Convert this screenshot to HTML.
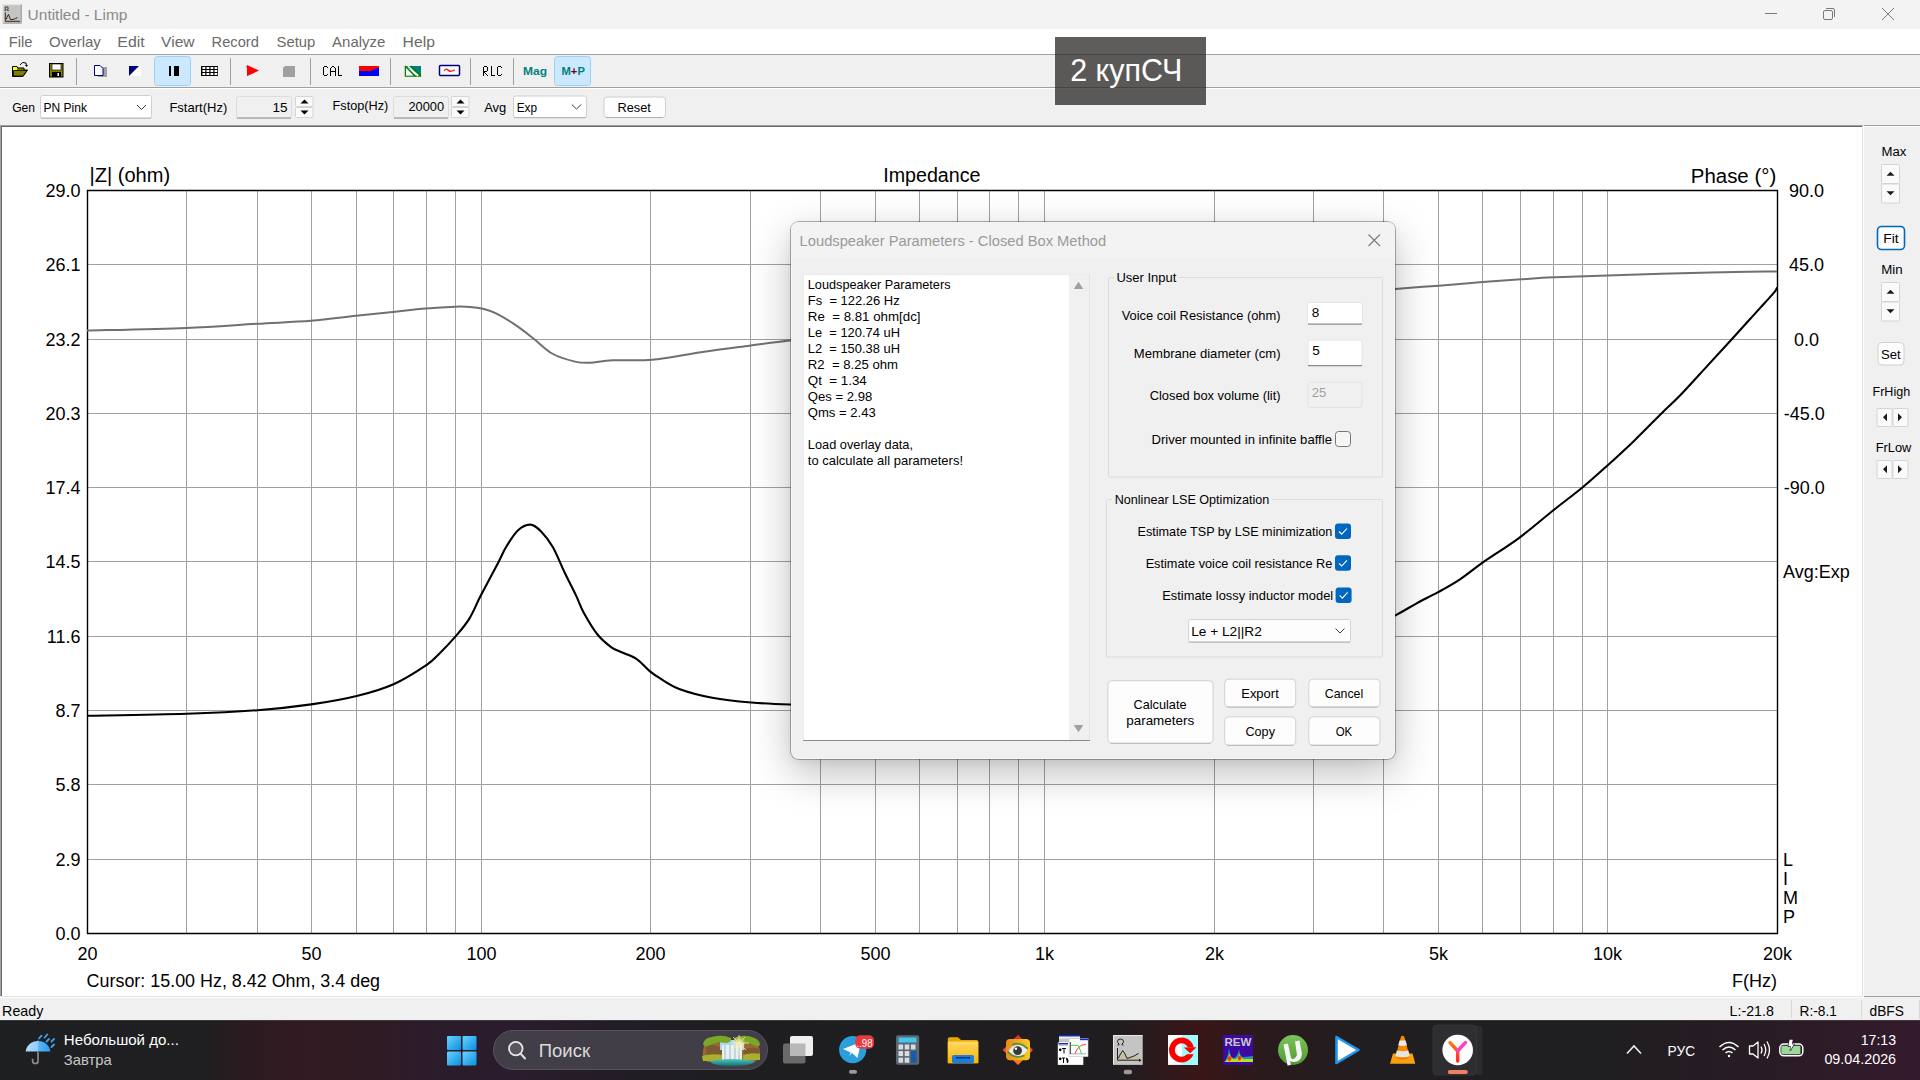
<!DOCTYPE html><html><head><meta charset="utf-8"><style>*{margin:0;padding:0}html,body{width:1920px;height:1080px;overflow:hidden;background:#f0f0f0;position:relative;font-family:"Liberation Sans",sans-serif}svg text{white-space:pre}</style></head><body><svg width="1920" height="126" viewBox="0 0 1920 126" style="position:absolute;left:0px;top:0px;" font-family='"Liberation Sans", sans-serif' shape-rendering="auto"><rect x="0" y="0" width="1920" height="29" fill="#f3f3f3"/><rect x="0" y="29" width="1920" height="25" fill="#ffffff"/><rect x="0" y="54" width="1920" height="1" fill="#a0a0a0"/><rect x="0" y="55" width="1920" height="32" fill="#f0f0f0"/><rect x="0" y="87" width="1920" height="1" fill="#a0a0a0"/><rect x="0" y="88" width="1920" height="1" fill="#ffffff"/><rect x="0" y="89" width="1920" height="36" fill="#f0f0f0"/><rect x="2.5" y="4.2" width="19.2" height="19.4" fill="#c4c4c4"/><path d="M3 23.6 V4.7 H21.7" fill="none" stroke="#ecead0" stroke-width="1"/><path d="M3 23.1 H21.2 V4.5" fill="none" stroke="#9a9a9a" stroke-width="1"/><path d="M5.8 21 L6.5 19 L7.5 16 L8.5 14.5 L9.5 17 L10.5 19.5 L13 19.5 L15.5 18.5 L17.5 17.5 L18.3 17.5 V21Z" fill="#c8c0a0"/><path d="M5.3 12.5 V21.3 H20 M5.8 19.5 L6.8 18 L7.5 16 L8.5 14.5 L9.5 17 L10.5 19.5 L13 19.5 L15.5 18.5 L17.5 17.5" fill="none" stroke="#1a1a1a" stroke-width="0.9"/><path d="M4.3 10.3 H5.8 V9.5 Q5 8.7 5 7.9 Q5 6.8 6.6 6.8 Q8.2 6.8 8.2 7.9 Q8.2 8.7 7.4 9.5 V10.3 H8.8" fill="none" stroke="#1a1a1a" stroke-width="0.9"/><text x="27.60" y="20" font-size="15" fill="#8a8a8a" font-weight="normal" textLength="99.80" lengthAdjust="spacingAndGlyphs" >Untitled - Limp</text><line x1="1765" y1="13.5" x2="1777" y2="13.5" stroke="#7a7a7a" stroke-width="1"/><rect x="1823.5" y="10.5" width="9" height="9" rx="1.5" fill="none" stroke="#7a7a7a" stroke-width="1"/><path d="M1826 8.5 H1833 A1.5 1.5 0 0 1 1834.5 10 V17" fill="none" stroke="#7a7a7a" stroke-width="1"/><path d="M1882 8 L1894 20 M1894 8 L1882 20" stroke="#7a7a7a" stroke-width="1"/><text x="8.72" y="47" font-size="14.6" fill="#6a6a6a" font-weight="normal" textLength="23.90" lengthAdjust="spacingAndGlyphs" >File</text><text x="49.12" y="47" font-size="14.6" fill="#6a6a6a" font-weight="normal" textLength="51.75" lengthAdjust="spacingAndGlyphs" >Overlay</text><text x="117.37" y="47" font-size="14.6" fill="#6a6a6a" font-weight="normal" textLength="27.25" lengthAdjust="spacingAndGlyphs" >Edit</text><text x="161.12" y="47" font-size="14.6" fill="#6a6a6a" font-weight="normal" textLength="33.50" lengthAdjust="spacingAndGlyphs" >View</text><text x="211.62" y="47" font-size="14.6" fill="#6a6a6a" font-weight="normal" textLength="47.25" lengthAdjust="spacingAndGlyphs" >Record</text><text x="276.62" y="47" font-size="14.6" fill="#6a6a6a" font-weight="normal" textLength="38.75" lengthAdjust="spacingAndGlyphs" >Setup</text><text x="332.12" y="47" font-size="14.6" fill="#6a6a6a" font-weight="normal" textLength="53.25" lengthAdjust="spacingAndGlyphs" >Analyze</text><text x="402.62" y="47" font-size="14.6" fill="#6a6a6a" font-weight="normal" textLength="32.25" lengthAdjust="spacingAndGlyphs" >Help</text><line x1="76.5" y1="58" x2="76.5" y2="85" stroke="#a0a0a0" stroke-width="1"/><line x1="230.5" y1="58" x2="230.5" y2="85" stroke="#a0a0a0" stroke-width="1"/><line x1="310.5" y1="58" x2="310.5" y2="85" stroke="#a0a0a0" stroke-width="1"/><line x1="390.5" y1="58" x2="390.5" y2="85" stroke="#a0a0a0" stroke-width="1"/><line x1="470.5" y1="58" x2="470.5" y2="85" stroke="#a0a0a0" stroke-width="1"/><line x1="513.5" y1="58" x2="513.5" y2="85" stroke="#a0a0a0" stroke-width="1"/><path d="M12.5 66.5 H17 L18 68 H24 V70 H27.5 L23 76.5 H12.5 Z" fill="#808000" stroke="#000" stroke-width="1"/><path d="M13 67 H17 V70 H14 L13 73Z" fill="#ffff00"/><path d="M13.5 70.5 H27 L23 76 H13.5Z" fill="#808000" stroke="#000" stroke-width="0.8"/><path d="M20 65 Q22 61 26 63 L26.5 66" fill="none" stroke="#000" stroke-width="1"/><path d="M25 65 h3 l-1.5 2z" fill="#000"/><rect x="49.5" y="63.5" width="13.5" height="13.5" fill="#808000" stroke="#000" stroke-width="1"/><rect x="52" y="64" width="9" height="6" fill="#fff" stroke="#000" stroke-width="0.6"/><rect x="52" y="72" width="9" height="5" fill="#000"/><rect x="57.5" y="73" width="1.5" height="3" fill="#fff"/><rect x="98" y="67" width="9" height="10" fill="#a0a0a0"/><path d="M94.5 65.5 H100 L103 68.5 V75.5 H94.5Z" fill="#fff" stroke="#000080" stroke-width="1"/><rect x="129" y="66" width="12" height="10" fill="#fff"/><path d="M129 66 H139 L129 76Z" fill="#000080"/><rect x="154.5" y="56.5" width="36" height="29" rx="3" fill="#cce8ff" stroke="#99d1ff" stroke-width="1"/><rect x="169" y="66" width="2" height="10" fill="#000"/><rect x="174" y="66" width="5" height="10" fill="#000"/><rect x="201" y="66" width="17" height="10" fill="#000"/><rect x="202.5" y="67" width="2.8" height="2" fill="#fff"/><rect x="206.5" y="67" width="2.8" height="2" fill="#fff"/><rect x="210.5" y="67" width="2.8" height="2" fill="#fff"/><rect x="214.5" y="67" width="2.8" height="2" fill="#fff"/><rect x="202.5" y="70" width="2.8" height="2" fill="#fff"/><rect x="206.5" y="70" width="2.8" height="2" fill="#fff"/><rect x="210.5" y="70" width="2.8" height="2" fill="#fff"/><rect x="214.5" y="70" width="2.8" height="2" fill="#fff"/><rect x="202.5" y="73" width="2.8" height="2" fill="#fff"/><rect x="206.5" y="73" width="2.8" height="2" fill="#fff"/><rect x="210.5" y="73" width="2.8" height="2" fill="#fff"/><rect x="214.5" y="73" width="2.8" height="2" fill="#fff"/><path d="M245 67 L247 65.5 V76 L258 71 Z" fill="#a0a0a0"/><path d="M247 65 L259 70.5 L247 76Z" fill="#ff0000"/><path d="M285 66 H295 V77 H283 V68Z" fill="#a0a0a0"/><g fill="#000" shape-rendering="crispEdges"><rect x="323" y="67" width="1" height="8"/><rect x="324" y="66" width="3" height="1"/><rect x="327" y="67" width="1" height="1"/><rect x="327" y="74" width="1" height="1"/><rect x="324" y="75" width="3" height="1"/><rect x="330" y="68" width="1" height="8"/><rect x="335" y="68" width="1" height="8"/><rect x="332" y="66" width="2" height="1"/><rect x="331" y="67" width="1" height="1"/><rect x="334" y="67" width="1" height="1"/><rect x="330" y="71" width="6" height="1"/><rect x="338" y="66" width="1" height="10"/><rect x="338" y="75" width="4" height="1"/></g><rect x="359" y="66" width="20" height="10" fill="#0000ff"/><path d="M359 66 H379 V68 L377 68 L375 69 L373 70 L371 71 H359Z" fill="#ff0000"/><path d="M405 66 H421 V76 Z" fill="#008080"/><path d="M405.5 66.5 V76 H421" fill="none" stroke="#008000" stroke-width="1.5"/><path d="M405 66 L415 76 M411 66 L421 76" stroke="#008000" stroke-width="1.6"/><path d="M408 66 L418 76" stroke="#fff" stroke-width="1.4"/><path d="M406 68 L406 75.5 L413 75.5Z" fill="#fff"/><rect x="439.5" y="65.5" width="20" height="10" rx="1" fill="#fff" stroke="#000080" stroke-width="1.5"/><path d="M444 71 Q446 68 448 70 T452 71 T455 70" fill="none" stroke="#ff0000" stroke-width="1.2"/><g fill="#000" shape-rendering="crispEdges"><rect x="483" y="67" width="1" height="9"/><rect x="484" y="66" width="3" height="1"/><rect x="487" y="67" width="1" height="4"/><rect x="484" y="71" width="3" height="1"/><rect x="484" y="72" width="1" height="1"/><rect x="485" y="73" width="1" height="1"/><rect x="486" y="74" width="1" height="1"/><rect x="487" y="75" width="1" height="1"/><rect x="491" y="66" width="1" height="10"/><rect x="491" y="75" width="4" height="1"/><rect x="497" y="67" width="1" height="8"/><rect x="498" y="66" width="3" height="1"/><rect x="501" y="67" width="1" height="1"/><rect x="501" y="74" width="1" height="1"/><rect x="498" y="75" width="3" height="1"/></g><text x="523.08" y="75" font-size="11.2" fill="#008080" font-weight="bold" textLength="23.99" lengthAdjust="spacingAndGlyphs" >Mag</text><rect x="554.5" y="56.5" width="36" height="29" rx="3" fill="#cce8ff" stroke="#99d1ff" stroke-width="1"/><text x="561.5" y="75" font-size="11.2" font-weight="bold" fill="#008080">M<tspan fill="#800000">+</tspan>P</text><text x="12.22" y="112" font-size="13" fill="#000" font-weight="normal" textLength="22.81" lengthAdjust="spacingAndGlyphs" >Gen</text><rect x="40.5" y="95.5" width="111" height="23" rx="2" fill="#fff" stroke="#d0d0d0"/><line x1="41" y1="118" x2="151" y2="118" stroke="#b8b8b8"/><text x="43.47" y="112" font-size="13" fill="#000" font-weight="normal" textLength="43.56" lengthAdjust="spacingAndGlyphs" >PN Pink</text><path d="M137 105 L141.5 109.5 L146 105" fill="none" stroke="#404040" stroke-width="1"/><text x="169.42" y="111.75" font-size="13" fill="#000" font-weight="normal" textLength="57.86" lengthAdjust="spacingAndGlyphs" >Fstart(Hz)</text><rect x="236.5" y="96.5" width="55" height="22" rx="2" fill="#f0f0f0" stroke="#dcdcdc"/><line x1="237" y1="118" x2="291" y2="118" stroke="#8a8a8a" stroke-width="1"/><text x="272.47" y="112" font-size="13" fill="#000" font-weight="normal" textLength="15.06" lengthAdjust="spacingAndGlyphs" >15</text><rect x="295.5" y="96.5" width="17.5" height="10" rx="1" fill="#fafafa" stroke="#d4d4d4"/><rect x="295.5" y="107.5" width="17.5" height="10" rx="1" fill="#fafafa" stroke="#d4d4d4"/><path d="M300.5 103.5 L304.5 99.5 L308.5 103.5Z" fill="#000"/><path d="M300.5 110.5 L304.5 114.5 L308.5 110.5Z" fill="#000"/><rect x="451.5" y="96.5" width="17.5" height="10" rx="1" fill="#fafafa" stroke="#d4d4d4"/><rect x="451.5" y="107.5" width="17.5" height="10" rx="1" fill="#fafafa" stroke="#d4d4d4"/><path d="M456.5 103.5 L460.5 99.5 L464.5 103.5Z" fill="#000"/><path d="M456.5 110.5 L460.5 114.5 L464.5 110.5Z" fill="#000"/><text x="332.52" y="110.1" font-size="13" fill="#000" font-weight="normal" textLength="55.76" lengthAdjust="spacingAndGlyphs" >Fstop(Hz)</text><rect x="393.5" y="96.5" width="55" height="22" rx="2" fill="#f0f0f0" stroke="#dcdcdc"/><line x1="394" y1="118" x2="448" y2="118" stroke="#8a8a8a" stroke-width="1"/><text x="408.42" y="110.7" font-size="13" fill="#000" font-weight="normal" textLength="35.66" lengthAdjust="spacingAndGlyphs" >20000</text><text x="484.22" y="112" font-size="13" fill="#000" font-weight="normal" textLength="22.06" lengthAdjust="spacingAndGlyphs" >Avg</text><rect x="513.5" y="96" width="73" height="22" rx="2" fill="#fff" stroke="#d0d0d0"/><line x1="514" y1="117.5" x2="586" y2="117.5" stroke="#b8b8b8"/><text x="516.72" y="112" font-size="13" fill="#000" font-weight="normal" textLength="20.31" lengthAdjust="spacingAndGlyphs" >Exp</text><path d="M571.75 104.5 L576.5 109 L581.25 104.5" fill="none" stroke="#404040" stroke-width="1"/><rect x="604" y="97" width="61.5" height="20.5" rx="3" fill="#fdfdfd" stroke="#d0d0d0"/><line x1="606" y1="117.5" x2="663" y2="117.5" stroke="#b0b0b0"/><text x="617.47" y="112" font-size="13" fill="#000" font-weight="normal" textLength="33.31" lengthAdjust="spacingAndGlyphs" >Reset</text></svg><svg width="1920" height="895" viewBox="0 125 1920 895" style="position:absolute;left:0px;top:125px;" font-family='"Liberation Sans", sans-serif' shape-rendering="auto"><rect x="0" y="125" width="1863" height="873" fill="#ffffff"/><rect x="0" y="125" width="1863" height="1" fill="#a0a0a0"/><rect x="0" y="126" width="1863" height="1" fill="#696969"/><rect x="0" y="125" width="1" height="872" fill="#a0a0a0"/><rect x="1" y="126" width="1" height="871" fill="#696969"/><rect x="0" y="996" width="1863" height="1" fill="#e3e3e3"/><rect x="0" y="997" width="1864" height="1" fill="#ffffff"/><rect x="1862" y="126" width="1" height="871" fill="#e0e0e0"/><rect x="1863" y="126" width="1" height="872" fill="#ffffff"/><line x1="186.5" y1="190" x2="186.5" y2="933" stroke="#a0a0a0" stroke-width="1"/><line x1="257.5" y1="190" x2="257.5" y2="933" stroke="#a0a0a0" stroke-width="1"/><line x1="311.5" y1="190" x2="311.5" y2="933" stroke="#a0a0a0" stroke-width="1"/><line x1="356.5" y1="190" x2="356.5" y2="933" stroke="#a0a0a0" stroke-width="1"/><line x1="393.5" y1="190" x2="393.5" y2="933" stroke="#a0a0a0" stroke-width="1"/><line x1="426.5" y1="190" x2="426.5" y2="933" stroke="#a0a0a0" stroke-width="1"/><line x1="455.5" y1="190" x2="455.5" y2="933" stroke="#a0a0a0" stroke-width="1"/><line x1="481.5" y1="190" x2="481.5" y2="933" stroke="#a0a0a0" stroke-width="1"/><line x1="650.5" y1="190" x2="650.5" y2="933" stroke="#a0a0a0" stroke-width="1"/><line x1="750.5" y1="190" x2="750.5" y2="933" stroke="#a0a0a0" stroke-width="1"/><line x1="820.5" y1="190" x2="820.5" y2="933" stroke="#a0a0a0" stroke-width="1"/><line x1="875.5" y1="190" x2="875.5" y2="933" stroke="#a0a0a0" stroke-width="1"/><line x1="919.5" y1="190" x2="919.5" y2="933" stroke="#a0a0a0" stroke-width="1"/><line x1="957.5" y1="190" x2="957.5" y2="933" stroke="#a0a0a0" stroke-width="1"/><line x1="989.5" y1="190" x2="989.5" y2="933" stroke="#a0a0a0" stroke-width="1"/><line x1="1018.5" y1="190" x2="1018.5" y2="933" stroke="#a0a0a0" stroke-width="1"/><line x1="1044.5" y1="190" x2="1044.5" y2="933" stroke="#a0a0a0" stroke-width="1"/><line x1="1214.5" y1="190" x2="1214.5" y2="933" stroke="#a0a0a0" stroke-width="1"/><line x1="1313.5" y1="190" x2="1313.5" y2="933" stroke="#a0a0a0" stroke-width="1"/><line x1="1383.5" y1="190" x2="1383.5" y2="933" stroke="#a0a0a0" stroke-width="1"/><line x1="1438.5" y1="190" x2="1438.5" y2="933" stroke="#a0a0a0" stroke-width="1"/><line x1="1482.5" y1="190" x2="1482.5" y2="933" stroke="#a0a0a0" stroke-width="1"/><line x1="1520.5" y1="190" x2="1520.5" y2="933" stroke="#a0a0a0" stroke-width="1"/><line x1="1553.5" y1="190" x2="1553.5" y2="933" stroke="#a0a0a0" stroke-width="1"/><line x1="1582.5" y1="190" x2="1582.5" y2="933" stroke="#a0a0a0" stroke-width="1"/><line x1="1607.5" y1="190" x2="1607.5" y2="933" stroke="#a0a0a0" stroke-width="1"/><line x1="87" y1="264.5" x2="1777" y2="264.5" stroke="#a0a0a0" stroke-width="1"/><line x1="87" y1="339.5" x2="1777" y2="339.5" stroke="#a0a0a0" stroke-width="1"/><line x1="87" y1="413.5" x2="1777" y2="413.5" stroke="#a0a0a0" stroke-width="1"/><line x1="87" y1="487.5" x2="1777" y2="487.5" stroke="#a0a0a0" stroke-width="1"/><line x1="87" y1="561.5" x2="1777" y2="561.5" stroke="#a0a0a0" stroke-width="1"/><line x1="87" y1="636.5" x2="1777" y2="636.5" stroke="#a0a0a0" stroke-width="1"/><line x1="87" y1="710.5" x2="1777" y2="710.5" stroke="#a0a0a0" stroke-width="1"/><line x1="87" y1="784.5" x2="1777" y2="784.5" stroke="#a0a0a0" stroke-width="1"/><line x1="87" y1="859.5" x2="1777" y2="859.5" stroke="#a0a0a0" stroke-width="1"/><path d="M87.5 190.5 H1777.5 V933.5 H87.5Z" fill="none" stroke="#000" stroke-width="1.4"/><path d="M87.00 330.60 C103.50 330.15 157.67 329.04 186.00 327.90 C214.33 326.76 236.17 324.93 257.00 323.75 C277.83 322.57 294.50 322.12 311.00 320.80 C327.50 319.48 342.33 317.28 356.00 315.80 C369.67 314.32 381.33 313.12 393.00 311.90 C404.67 310.68 415.67 309.37 426.00 308.50 C436.33 307.63 447.67 306.97 455.00 306.70 C462.33 306.43 465.33 306.56 470.00 306.90 C474.67 307.24 478.67 307.67 483.00 308.75 C487.33 309.83 490.67 310.74 496.00 313.40 C501.33 316.06 508.71 320.47 515.00 324.70 C521.29 328.93 527.50 333.91 533.75 338.75 C540.00 343.59 545.62 349.94 552.50 353.75 C559.38 357.56 568.75 360.10 575.00 361.60 C581.25 363.10 583.75 362.97 590.00 362.75 C596.25 362.53 602.17 360.80 612.50 360.30 C622.83 359.80 637.00 361.15 652.00 359.75 C667.00 358.35 686.27 354.24 702.50 351.90 C718.73 349.56 734.87 347.58 749.40 345.70 C763.93 343.82 776.27 342.13 789.70 340.60 C803.13 339.07 811.62 338.27 830.00 336.50 C848.38 334.73 871.67 332.58 900.00 330.00 C928.33 327.42 966.67 324.00 1000.00 321.00 C1033.33 318.00 1066.67 314.83 1100.00 312.00 C1133.33 309.17 1166.67 306.67 1200.00 304.00 C1233.33 301.33 1275.00 297.83 1300.00 296.00 C1325.00 294.17 1334.17 294.18 1350.00 293.00 C1365.83 291.82 1380.22 290.12 1395.00 288.90 C1409.78 287.68 1424.12 286.85 1438.70 285.70 C1453.28 284.55 1468.78 283.07 1482.50 282.00 C1496.22 280.93 1509.25 280.08 1521.00 279.30 C1532.75 278.52 1538.60 277.92 1553.00 277.30 C1567.40 276.68 1581.07 276.42 1607.40 275.60 C1633.73 274.78 1682.73 273.10 1711.00 272.40 C1739.27 271.70 1766.00 271.57 1777.00 271.40" fill="none" stroke="#707070" stroke-width="2" stroke-linejoin="round"/><path d="M87.00 715.80 C103.58 715.46 158.08 714.68 186.50 713.75 C214.92 712.82 236.71 711.76 257.50 710.20 C278.29 708.64 294.72 706.77 311.25 704.40 C327.78 702.03 342.99 699.37 356.70 696.00 C370.41 692.63 381.83 689.40 393.50 684.20 C405.17 679.00 418.95 670.02 426.70 664.80 C434.45 659.58 435.18 657.63 440.00 652.90 C444.82 648.17 450.73 642.07 455.60 636.40 C460.47 630.73 465.00 625.70 469.20 618.90 C473.40 612.10 475.95 605.00 480.80 595.60 C485.65 586.20 494.08 570.60 498.30 562.50 C502.52 554.40 502.85 552.35 506.10 547.00 C509.35 541.65 513.75 534.13 517.80 530.40 C521.85 526.67 526.52 524.43 530.40 524.60 C534.28 524.77 537.37 527.67 541.10 531.40 C544.83 535.13 548.90 540.20 552.80 547.00 C556.70 553.80 560.62 564.10 564.50 572.20 C568.38 580.30 572.87 588.80 576.10 595.60 C579.33 602.40 580.33 606.52 583.90 613.00 C587.47 619.48 592.97 628.82 597.50 634.50 C602.03 640.18 607.20 644.18 611.10 647.10 C615.00 650.02 616.68 650.05 620.90 652.00 C625.12 653.95 631.55 655.57 636.40 658.80 C641.25 662.03 646.10 668.17 650.00 671.40 C653.90 674.63 654.93 675.28 659.80 678.20 C664.67 681.12 670.45 685.65 679.20 688.90 C687.95 692.15 700.30 695.43 712.30 697.70 C724.30 699.97 738.25 701.37 751.20 702.50 C764.15 703.63 776.87 704.08 790.00 704.50 C803.13 704.92 811.67 705.00 830.00 705.00 C848.33 705.00 871.67 705.17 900.00 704.50 C928.33 703.83 966.67 702.75 1000.00 701.00 C1033.33 699.25 1066.67 697.50 1100.00 694.00 C1133.33 690.50 1166.67 685.83 1200.00 680.00 C1233.33 674.17 1273.33 666.67 1300.00 659.00 C1326.67 651.33 1344.02 641.30 1360.00 634.00 C1375.98 626.70 1386.45 620.32 1395.90 615.20 C1405.35 610.08 1409.67 607.13 1416.70 603.30 C1423.73 599.47 1430.95 596.15 1438.10 592.20 C1445.25 588.25 1452.18 584.53 1459.60 579.60 C1467.02 574.67 1472.72 569.52 1482.60 562.60 C1492.48 555.68 1507.05 546.87 1518.90 538.10 C1530.75 529.33 1543.12 518.43 1553.70 510.00 C1564.28 501.57 1573.72 494.67 1582.40 487.50 C1591.08 480.33 1597.12 474.85 1605.80 467.00 C1614.48 459.15 1625.10 449.45 1634.50 440.40 C1643.90 431.35 1654.62 420.17 1662.20 412.70 C1669.78 405.23 1672.40 403.48 1680.00 395.60 C1687.60 387.72 1699.28 374.67 1707.80 365.40 C1716.32 356.13 1724.62 347.10 1731.10 340.00 C1737.58 332.90 1741.15 328.92 1746.70 322.80 C1752.25 316.68 1759.78 308.40 1764.40 303.30 C1769.02 298.20 1772.27 294.88 1774.40 292.20 C1776.53 289.52 1776.73 288.03 1777.20 287.20" fill="none" stroke="#000" stroke-width="2.1" stroke-linejoin="round"/><text x="80.5" y="196.8" text-anchor="end" font-size="18" fill="#000">29.0</text><text x="80.5" y="270.8" text-anchor="end" font-size="18" fill="#000">26.1</text><text x="80.5" y="345.8" text-anchor="end" font-size="18" fill="#000">23.2</text><text x="80.5" y="419.8" text-anchor="end" font-size="18" fill="#000">20.3</text><text x="80.5" y="493.8" text-anchor="end" font-size="18" fill="#000">17.4</text><text x="80.5" y="567.8" text-anchor="end" font-size="18" fill="#000">14.5</text><text x="80.5" y="642.8" text-anchor="end" font-size="18" fill="#000">11.6</text><text x="80.5" y="716.8" text-anchor="end" font-size="18" fill="#000">8.7</text><text x="80.5" y="790.8" text-anchor="end" font-size="18" fill="#000">5.8</text><text x="80.5" y="865.8" text-anchor="end" font-size="18" fill="#000">2.9</text><text x="80.5" y="939.8" text-anchor="end" font-size="18" fill="#000">0.0</text><text x="1806.5" y="196.8" text-anchor="middle" font-size="18" fill="#000">90.0</text><text x="1806.5" y="270.8" text-anchor="middle" font-size="18" fill="#000">45.0</text><text x="1806.5" y="345.8" text-anchor="middle" font-size="18" fill="#000">0.0</text><text x="1804.2" y="419.8" text-anchor="middle" font-size="18" fill="#000">-45.0</text><text x="1804.2" y="493.8" text-anchor="middle" font-size="18" fill="#000">-90.0</text><text x="87.5" y="959.7" text-anchor="middle" font-size="18" fill="#000">20</text><text x="311.5" y="959.7" text-anchor="middle" font-size="18" fill="#000">50</text><text x="481.5" y="959.7" text-anchor="middle" font-size="18" fill="#000">100</text><text x="650.5" y="959.7" text-anchor="middle" font-size="18" fill="#000">200</text><text x="875.5" y="959.7" text-anchor="middle" font-size="18" fill="#000">500</text><text x="1044.5" y="959.7" text-anchor="middle" font-size="18" fill="#000">1k</text><text x="1214.5" y="959.7" text-anchor="middle" font-size="18" fill="#000">2k</text><text x="1438.5" y="959.7" text-anchor="middle" font-size="18" fill="#000">5k</text><text x="1607.5" y="959.7" text-anchor="middle" font-size="18" fill="#000">10k</text><text x="1777.5" y="959.7" text-anchor="middle" font-size="18" fill="#000">20k</text><text x="89.50" y="181.8" font-size="20" fill="#000" font-weight="normal" textLength="80.60" lengthAdjust="spacingAndGlyphs" >|Z| (ohm)</text><text x="883.20" y="181.9" font-size="20" fill="#000" font-weight="normal" textLength="97.30" lengthAdjust="spacingAndGlyphs" >Impedance</text><text x="1690.80" y="182.5" font-size="20" fill="#000" font-weight="normal" textLength="85.40" lengthAdjust="spacingAndGlyphs" >Phase (°)</text><text x="86.62" y="986.8" font-size="18" fill="#000" font-weight="normal" textLength="293.46" lengthAdjust="spacingAndGlyphs" >Cursor: 15.00 Hz, 8.42 Ohm, 3.4 deg</text><text x="1777" y="987" text-anchor="end" font-size="18" fill="#000">F(Hz)</text><text x="1783" y="578" text-anchor="start" font-size="18" fill="#000">Avg:Exp</text><text x="1783" y="866" text-anchor="start" font-size="18" fill="#000">L</text><text x="1783" y="885" text-anchor="start" font-size="18" fill="#000">I</text><text x="1783" y="904" text-anchor="start" font-size="18" fill="#000">M</text><text x="1783" y="923" text-anchor="start" font-size="18" fill="#000">P</text><rect x="1864" y="126" width="56" height="872" fill="#f0f0f0"/><rect x="1864" y="996" width="56" height="1" fill="#a0a0a0"/><rect x="1864" y="125" width="56" height="1" fill="#a0a0a0"/><rect x="1864" y="126" width="56" height="1" fill="#ffffff"/><text x="1881.46" y="155.8" font-size="12.3" fill="#000" font-weight="normal" textLength="24.88" lengthAdjust="spacingAndGlyphs" >Max</text><rect x="1881.5" y="164.5" width="18" height="19.0" rx="1" fill="#fafafa" stroke="#d4d4d4"/><rect x="1881.5" y="184.0" width="18" height="19.0" rx="1" fill="#fafafa" stroke="#d4d4d4"/><path d="M1886.5 175.75 L1890.5 171.75 L1894.5 175.75Z" fill="#1a1a1a"/><path d="M1886.5 191.25 L1890.5 195.25 L1894.5 191.25Z" fill="#1a1a1a"/><rect x="1877.5" y="226.5" width="27" height="23" rx="4" fill="#fdfdfd" stroke="#0067c0" stroke-width="1.6"/><text x="1883.26" y="242.5" font-size="12.3" fill="#000" font-weight="normal" textLength="15.48" lengthAdjust="spacingAndGlyphs" >Fit</text><text x="1881.26" y="273.9" font-size="12.3" fill="#000" font-weight="normal" textLength="21.48" lengthAdjust="spacingAndGlyphs" >Min</text><rect x="1881.5" y="282.5" width="18" height="19.0" rx="1" fill="#fafafa" stroke="#d4d4d4"/><rect x="1881.5" y="302.0" width="18" height="19.0" rx="1" fill="#fafafa" stroke="#d4d4d4"/><path d="M1886.5 293.75 L1890.5 289.75 L1894.5 293.75Z" fill="#1a1a1a"/><path d="M1886.5 309.25 L1890.5 313.25 L1894.5 309.25Z" fill="#1a1a1a"/><rect x="1878" y="342.5" width="26" height="22.5" rx="4" fill="#fdfdfd" stroke="#d0d0d0"/><text x="1881.06" y="358.5" font-size="12.3" fill="#000" font-weight="normal" textLength="19.68" lengthAdjust="spacingAndGlyphs" >Set</text><text x="1872.56" y="395.8" font-size="12.3" fill="#000" font-weight="normal" textLength="37.58" lengthAdjust="spacingAndGlyphs" >FrHigh</text><rect x="1877" y="408.5" width="15" height="18.0" rx="1" fill="#fafafa" stroke="#d4d4d4"/><rect x="1893" y="408.5" width="15" height="18.0" rx="1" fill="#fafafa" stroke="#d4d4d4"/><path d="M1887 413.25 L1883 417.25 L1887 421.25Z" fill="#1a1a1a"/><path d="M1898 413.25 L1902 417.25 L1898 421.25Z" fill="#1a1a1a"/><text x="1875.66" y="451.9" font-size="12.3" fill="#000" font-weight="normal" textLength="35.68" lengthAdjust="spacingAndGlyphs" >FrLow</text><rect x="1877" y="460.5" width="15" height="18.0" rx="1" fill="#fafafa" stroke="#d4d4d4"/><rect x="1893" y="460.5" width="15" height="18.0" rx="1" fill="#fafafa" stroke="#d4d4d4"/><path d="M1887 465.25 L1883 469.25 L1887 473.25Z" fill="#1a1a1a"/><path d="M1898 465.25 L1902 469.25 L1898 473.25Z" fill="#1a1a1a"/><rect x="0" y="998" width="1920" height="22" fill="#f0f0f0"/><text x="2.12" y="1015.8" font-size="14.6" fill="#000" font-weight="normal" textLength="41.25" lengthAdjust="spacingAndGlyphs" >Ready</text><rect x="1791" y="1000" width="1" height="18" fill="#d6d6d6"/><rect x="1861" y="1000" width="1" height="19" fill="#d6d6d6"/><rect x="1919" y="1000" width="1" height="19" fill="#d6d6d6"/><text x="1729.62" y="1015.8" font-size="14.6" fill="#000" font-weight="normal" textLength="44.25" lengthAdjust="spacingAndGlyphs" >L:-21.8</text><text x="1799.62" y="1015.8" font-size="14.6" fill="#000" font-weight="normal" textLength="37.25" lengthAdjust="spacingAndGlyphs" >R:-8.1</text><text x="1869.62" y="1015.8" font-size="14.6" fill="#000" font-weight="normal" textLength="34.25" lengthAdjust="spacingAndGlyphs" >dBFS</text></svg><div style="position:absolute;left:791px;top:222px;width:604px;height:537px;border-radius:8px;background:#f0f0f0;box-shadow:inset 0 0 0 1px rgba(255,255,255,0.45),0 0 0 1px rgba(0,0,0,0.30),0 14px 42px rgba(0,0,0,0.26),0 2px 10px rgba(0,0,0,0.06);overflow:hidden"><div style="position:absolute;left:0;top:0;right:0;height:36px;background:#f3f3f3"></div></div><svg width="640" height="560" viewBox="780 215 640 560" style="position:absolute;left:780px;top:215px;" font-family='"Liberation Sans", sans-serif' shape-rendering="auto"><text x="799.62" y="245.8" font-size="14.7" fill="#9a9a9a" font-weight="normal" textLength="306.56" lengthAdjust="spacingAndGlyphs" >Loudspeaker Parameters - Closed Box Method</text><path d="M1368.5 234.5 L1380 246 M1380 234.5 L1368.5 246" stroke="#7a7a7a" stroke-width="1.1"/><rect x="803" y="274" width="287" height="467" fill="#ffffff"/><rect x="1069" y="275" width="20" height="465" fill="#f0f0f0"/><rect x="803" y="274" width="287" height="1" fill="#ececec"/><rect x="803" y="274" width="1" height="466" fill="#ececec"/><rect x="1089" y="274" width="1" height="466" fill="#e4e4e4"/><rect x="803" y="740" width="287" height="1" fill="#8a8a8a"/><path d="M1074.5 288.5 L1078.5 282.5 L1082.5 288.5Z" fill="#a0a0a0" stroke="#a0a0a0" stroke-width="1" stroke-linejoin="round"/><path d="M1074.5 725.5 L1078.5 731.5 L1082.5 725.5Z" fill="#a0a0a0" stroke="#a0a0a0" stroke-width="1" stroke-linejoin="round"/><text x="807.8" y="289.2" font-size="12.6" fill="#000" textLength="142.7" lengthAdjust="spacingAndGlyphs" xml:space="preserve">Loudspeaker Parameters</text><text x="807.8" y="305.2" font-size="12.6" fill="#000" textLength="91.9" lengthAdjust="spacingAndGlyphs" xml:space="preserve">Fs  = 122.26 Hz</text><text x="807.8" y="321.2" font-size="12.6" fill="#000" textLength="112.7" lengthAdjust="spacingAndGlyphs" xml:space="preserve">Re  = 8.81 ohm[dc]</text><text x="807.8" y="337.2" font-size="12.6" fill="#000" textLength="92.2" lengthAdjust="spacingAndGlyphs" xml:space="preserve">Le  = 120.74 uH</text><text x="807.8" y="353.2" font-size="12.6" fill="#000" textLength="92.2" lengthAdjust="spacingAndGlyphs" xml:space="preserve">L2  = 150.38 uH</text><text x="807.8" y="369.2" font-size="12.6" fill="#000" textLength="90.2" lengthAdjust="spacingAndGlyphs" xml:space="preserve">R2  = 8.25 ohm</text><text x="807.8" y="385.2" font-size="12.6" fill="#000" textLength="59.0" lengthAdjust="spacingAndGlyphs" xml:space="preserve">Qt  = 1.34</text><text x="807.8" y="401.2" font-size="12.6" fill="#000" textLength="64.4" lengthAdjust="spacingAndGlyphs" xml:space="preserve">Qes = 2.98</text><text x="807.8" y="417.2" font-size="12.6" fill="#000" textLength="68.0" lengthAdjust="spacingAndGlyphs" xml:space="preserve">Qms = 2.43</text><text x="807.8" y="449.2" font-size="12.6" fill="#000" textLength="105.2" lengthAdjust="spacingAndGlyphs" xml:space="preserve">Load overlay data,</text><text x="807.8" y="465.2" font-size="12.6" fill="#000" textLength="155.2" lengthAdjust="spacingAndGlyphs" xml:space="preserve">to calculate all parameters!</text><rect x="1108.5" y="277.5" width="274" height="199.5" rx="1" fill="none" stroke="#dcdcdc"/><rect x="1114" y="272" width="64" height="12" fill="#f0f0f0"/><text x="1116.43" y="282.1" font-size="12.8" fill="#000" font-weight="normal" textLength="59.94" lengthAdjust="spacingAndGlyphs" >User Input</text><text x="1121.63" y="320.2" font-size="12.8" fill="#000" font-weight="normal" textLength="158.94" lengthAdjust="spacingAndGlyphs" >Voice coil Resistance (ohm)</text><text x="1133.83" y="357.8" font-size="12.8" fill="#000" font-weight="normal" textLength="146.74" lengthAdjust="spacingAndGlyphs" >Membrane diameter (cm)</text><text x="1149.63" y="400" font-size="12.8" fill="#000" font-weight="normal" textLength="130.94" lengthAdjust="spacingAndGlyphs" >Closed box volume (lit)</text><text x="1151.43" y="444" font-size="12.8" fill="#000" font-weight="normal" textLength="180.54" lengthAdjust="spacingAndGlyphs" >Driver mounted in infinite baffle</text><rect x="1307.5" y="302.5" width="55" height="22" rx="2" fill="#fff" stroke="#e6e6e6"/><rect x="1308" y="323.5" width="54" height="1.2" fill="#8a8a8a"/><text x="1311.73" y="316.8" font-size="12.8" fill="#000" font-weight="normal" textLength="7.54" lengthAdjust="spacingAndGlyphs" >8</text><rect x="1308" y="340" width="54" height="26" rx="2" fill="#fff" stroke="#e6e6e6"/><rect x="1308" y="365" width="54" height="1.2" fill="#8a8a8a"/><text x="1312.23" y="355.2" font-size="12.8" fill="#000" font-weight="normal" textLength="7.54" lengthAdjust="spacingAndGlyphs" >5</text><rect x="1308" y="382" width="54" height="25.5" rx="2" fill="#f0f0f0" stroke="#e2e2e2"/><text x="1311.73" y="397.2" font-size="12.8" fill="#a0a0a0" font-weight="normal" textLength="14.54" lengthAdjust="spacingAndGlyphs" >25</text><rect x="1335.5" y="431.5" width="15" height="15" rx="3" fill="#f6f6f6" stroke="#767676"/><rect x="1106.5" y="499.5" width="276" height="157.5" rx="1" fill="none" stroke="#dcdcdc"/><rect x="1112" y="492" width="160" height="12" fill="#f0f0f0"/><text x="1114.73" y="504.2" font-size="12.8" fill="#000" font-weight="normal" textLength="154.54" lengthAdjust="spacingAndGlyphs" >Nonlinear LSE Optimization</text><text x="1137.53" y="535.8" font-size="12.8" fill="#000" font-weight="normal" textLength="194.84" lengthAdjust="spacingAndGlyphs" >Estimate TSP by LSE minimization</text><text x="1145.63" y="568" font-size="12.8" fill="#000" font-weight="normal" textLength="186.74" lengthAdjust="spacingAndGlyphs" >Estimate voice coil resistance Re</text><text x="1162.23" y="600" font-size="12.8" fill="#000" font-weight="normal" textLength="170.94" lengthAdjust="spacingAndGlyphs" >Estimate lossy inductor model</text><rect x="1335" y="523.5" width="16" height="15.5" rx="3" fill="#0067c0"/><path d="M1339 531.5 L1341.7 534.2 L1347 528.5" fill="none" stroke="#fff" stroke-width="1.1"/><rect x="1335" y="555.3" width="16" height="15.5" rx="3" fill="#0067c0"/><path d="M1339 563.3 L1341.7 566.0 L1347 560.3" fill="none" stroke="#fff" stroke-width="1.1"/><rect x="1335.6" y="587.4" width="16" height="15.5" rx="3" fill="#0067c0"/><path d="M1339.6 595.4 L1342.3 598.1 L1347.6 592.4" fill="none" stroke="#fff" stroke-width="1.1"/><rect x="1188.5" y="619.5" width="162" height="23" rx="2" fill="#fdfdfd" stroke="#d4d4d4"/><rect x="1189" y="641.5" width="161" height="1" fill="#b0b0b0"/><text x="1191.23" y="636.2" font-size="12.8" fill="#000" font-weight="normal" textLength="70.54" lengthAdjust="spacingAndGlyphs" >Le + L2||R2</text><path d="M1335.5 628.5 L1340 633 L1344.5 628.5" fill="none" stroke="#404040" stroke-width="1"/><rect x="1107.9" y="680.7" width="105.09999999999991" height="62.59999999999991" rx="4" fill="#fdfdfd" stroke="#d2d2d2"/><path d="M1110.4 743.3 H1210.5" stroke="#b8b8b8"/><text x="1133.53" y="708.6" font-size="12.8" fill="#000" font-weight="normal" textLength="53.04" lengthAdjust="spacingAndGlyphs" >Calculate</text><text x="1126.23" y="724.8" font-size="12.8" fill="#000" font-weight="normal" textLength="67.94" lengthAdjust="spacingAndGlyphs" >parameters</text><rect x="1224.7" y="679.2" width="71.0" height="27.899999999999977" rx="4" fill="#fdfdfd" stroke="#d2d2d2"/><path d="M1227.2 707.1 H1293.2" stroke="#b8b8b8"/><text x="1241.23" y="698" font-size="12.8" fill="#000" font-weight="normal" textLength="37.54" lengthAdjust="spacingAndGlyphs" >Export</text><rect x="1308.8" y="679.2" width="71.20000000000005" height="27.899999999999977" rx="4" fill="#fdfdfd" stroke="#d2d2d2"/><path d="M1311.3 707.1 H1377.5" stroke="#b8b8b8"/><text x="1324.73" y="698" font-size="12.8" fill="#000" font-weight="normal" textLength="38.54" lengthAdjust="spacingAndGlyphs" >Cancel</text><rect x="1224.7" y="716.8" width="71.0" height="28.5" rx="4" fill="#fdfdfd" stroke="#d2d2d2"/><path d="M1227.2 745.3 H1293.2" stroke="#b8b8b8"/><text x="1245.43" y="736.4" font-size="12.8" fill="#000" font-weight="normal" textLength="29.54" lengthAdjust="spacingAndGlyphs" >Copy</text><rect x="1308.8" y="716.8" width="71.20000000000005" height="28.5" rx="4" fill="#fdfdfd" stroke="#d2d2d2"/><path d="M1311.3 745.3 H1377.5" stroke="#b8b8b8"/><text x="1335.73" y="736.4" font-size="12.8" fill="#000" font-weight="normal" textLength="16.54" lengthAdjust="spacingAndGlyphs" >OK</text></svg><div style="position:absolute;left:1055px;top:37px;width:151px;height:68px;background:rgba(35,34,33,0.733)"></div><svg width="170" height="80" viewBox="1050 30 170 80" style="position:absolute;left:1050px;top:30px;" font-family='"Liberation Sans", sans-serif' shape-rendering="auto"><text x="1070.17" y="81.2" font-size="30.5" fill="#ffffff" font-weight="normal" textLength="112.16" lengthAdjust="spacingAndGlyphs" >2 купСЧ</text></svg><svg width="1920" height="60" viewBox="0 1020 1920 60" style="position:absolute;left:0px;top:1020px;" font-family='"Liberation Sans", sans-serif' shape-rendering="auto"><defs><linearGradient id="tbg" x1="0" y1="0" x2="1" y2="0"><stop offset="0.0000" stop-color="#1e1f21"/><stop offset="0.1042" stop-color="#1f1f21"/><stop offset="0.1302" stop-color="#2c1b20"/><stop offset="0.1562" stop-color="#321a22"/><stop offset="0.1979" stop-color="#2e1b24"/><stop offset="0.2292" stop-color="#2b1c2c"/><stop offset="0.2708" stop-color="#2a1c2c"/><stop offset="0.3385" stop-color="#201e24"/><stop offset="0.3750" stop-color="#1e1e21"/><stop offset="0.5833" stop-color="#201d20"/><stop offset="0.6250" stop-color="#3a1618"/><stop offset="0.6562" stop-color="#2a1a1c"/><stop offset="0.7188" stop-color="#201e21"/><stop offset="0.8333" stop-color="#1f1e21"/><stop offset="0.9115" stop-color="#281c24"/><stop offset="1.0000" stop-color="#341a2c"/></linearGradient><linearGradient id="win" x1="0" y1="0" x2="1" y2="1"><stop offset="0" stop-color="#6ad2ff"/><stop offset="1" stop-color="#0a8fe0"/></linearGradient><linearGradient id="fold" x1="0" y1="0" x2="0" y2="1"><stop offset="0" stop-color="#ffd866"/><stop offset="1" stop-color="#f5b600"/></linearGradient><linearGradient id="eyeg" x1="0" y1="0" x2="1" y2="1"><stop offset="0" stop-color="#f09020"/><stop offset="1" stop-color="#f8c030"/></linearGradient><linearGradient id="ug" x1="0" y1="0" x2="0" y2="1"><stop offset="0" stop-color="#7cc45a"/><stop offset="1" stop-color="#4e9a32"/></linearGradient><linearGradient id="yg" x1="0" y1="0" x2="0" y2="1"><stop offset="0" stop-color="#ff7a1a"/><stop offset="1" stop-color="#ff2a2a"/></linearGradient></defs><rect x="0" y="1020" width="1920" height="60" fill="url(#tbg)"/><rect x="0" y="1020" width="1920" height="1" fill="#3a3a3c"/><defs><linearGradient id="umb" x1="0" y1="0" x2="1" y2="0"><stop offset="0" stop-color="#b0dcff"/><stop offset="0.5" stop-color="#90cbfb"/><stop offset="0.52" stop-color="#5ab6f8"/><stop offset="1" stop-color="#2a9af0"/></linearGradient></defs><path d="M38 1052 V1061.5 Q38 1063.5 35.3 1063.5 Q32.6 1063.5 32.6 1061 V1058.8" fill="none" stroke="#908a88" stroke-width="1.7"/><path d="M38 1040.5 V1042" stroke="#908a88" stroke-width="1.6"/><path d="M25.8 1051.8 A12.25 10.8 0 0 1 50.3 1051.8 Q49 1050.6 47.7 1051.8 Q46.4 1050.6 45.1 1051.8 Q43.8 1050.6 42.5 1051.8 Q41.2 1050.6 39.9 1051.8 Q38.6 1050.6 37.3 1051.8 Q36 1050.6 34.7 1051.8 Q33.4 1050.6 32.1 1051.8 Q30.8 1050.6 29.5 1051.8 Q28.2 1050.6 25.8 1051.8Z" fill="url(#umb)"/><path d="M39 1038.5 L41.5 1035.6" stroke="#3aa4f4" stroke-width="1.8" stroke-linecap="round"/><path d="M44.6 1037.5 L47.3 1034.5" stroke="#3aa4f4" stroke-width="1.8" stroke-linecap="round"/><path d="M46.5 1041.5 L49 1039" stroke="#3aa4f4" stroke-width="1.8" stroke-linecap="round"/><path d="M51.5 1041.5 L54 1039" stroke="#3aa4f4" stroke-width="1.8" stroke-linecap="round"/><path d="M51.5 1047 L54 1044.5" stroke="#3aa4f4" stroke-width="1.8" stroke-linecap="round"/><text x="63.82" y="1044.7" font-size="14.6" fill="#ffffff" font-weight="normal" textLength="115.05" lengthAdjust="spacingAndGlyphs" >Небольшой до...</text><text x="63.82" y="1064.8" font-size="14.6" fill="#c8c8c8" font-weight="normal" textLength="48.05" lengthAdjust="spacingAndGlyphs" >Завтра</text><rect x="447" y="1036" width="14" height="14" rx="1" fill="url(#win)"/><rect x="462.5" y="1036" width="14" height="14" rx="1" fill="url(#win)"/><rect x="447" y="1051.5" width="14" height="14" rx="1" fill="url(#win)"/><rect x="462.5" y="1051.5" width="14" height="14" rx="1" fill="url(#win)"/><rect x="493.5" y="1030.5" width="274" height="39" rx="19.5" fill="#423e48" stroke="#57535d" stroke-width="1"/><circle cx="515.8" cy="1048.6" r="6.8" fill="#5a5660" stroke="#e8e8e8" stroke-width="1.8"/><path d="M520.5 1053.5 L525 1058.5" stroke="#e0e0e0" stroke-width="2" stroke-linecap="round"/><text x="538.82" y="1057.1" font-size="18" fill="#dcdcdc" font-weight="normal" textLength="51.16" lengthAdjust="spacingAndGlyphs" >Поиск</text><defs><filter id="soft" x="-10%" y="-10%" width="120%" height="120%"><feGaussianBlur stdDeviation="0.6"/></filter><linearGradient id="pool" x1="0" y1="0" x2="0" y2="1"><stop offset="0" stop-color="#50c8c0"/><stop offset="1" stop-color="#137070"/></linearGradient><radialGradient id="sun"><stop offset="0" stop-color="#fff4c0"/><stop offset="1" stop-color="#fff4c0" stop-opacity="0"/></radialGradient></defs><g filter="url(#soft)"><path d="M704 1046 Q702 1052 703 1058 Q705 1062 710 1062 L752 1062 Q759 1061 760 1055 Q760 1047 757 1043 L706 1043Z" fill="#9a6a30"/><path d="M706 1046 Q715 1043 724 1050 L724 1055 L706 1055Z" fill="#6a5030" opacity="0.6"/><path d="M744 1050 Q752 1046 759 1049 L759 1054 L744 1054Z" fill="#6a5030" opacity="0.6"/><rect x="720" y="1040" width="24" height="10" fill="#a8d8f0"/><path d="M703 1044 Q704 1038 712 1037 Q722 1034 731 1038 Q732 1042 727 1043 Q716 1041 708 1046 Q704 1047 703 1044Z" fill="#78a828"/><path d="M734 1038 Q742 1034 752 1037 Q759 1039 760 1044 Q760 1047 756 1046 Q748 1042 740 1043 Q734 1042 734 1038Z" fill="#78a828"/><path d="M702 1056 Q710 1053 724 1055 L724 1061 L703 1061Z" fill="#a8b030"/><path d="M743 1055 Q752 1052 760 1054 L760 1060 L743 1060Z" fill="#a8b030"/><rect x="722" y="1045" width="20" height="15" fill="#e8f0f4"/><path d="M725 1045 V1060 M730 1045 V1060 M735 1045 V1060 M739 1045 V1060" stroke="#a0b8c0" stroke-width="1"/><path d="M710 1061 Q730 1057 755 1061 Q752 1066 732 1066 Q712 1066 710 1061Z" fill="url(#pool)"/><circle cx="739" cy="1043" r="7" fill="url(#sun)"/><path d="M739 1035 V1055 M731 1043 H749 M733 1037 L746 1050 M745 1037 L733 1050" stroke="#ffe8a0" stroke-width="1" opacity="0.8"/></g><rect x="783" y="1043.5" width="22.5" height="20" rx="2" fill="#6a6a6a"/><rect x="790" y="1036" width="23" height="20" rx="2" fill="#efefef"/><rect x="790" y="1043.5" width="15.5" height="12.5" fill="#b8b8b8"/><circle cx="852.7" cy="1049.7" r="13.6" fill="#2a9fdc"/><path d="M843 1049 L861 1042 L857.5 1058 L852 1053 Z" fill="#fff"/><path d="M852 1053 L849.5 1056 L850.5 1051Z" fill="#d0e8f8"/><rect x="855.3" y="1035.2" width="18.7" height="13.5" rx="5" fill="#e83a3e"/><text x="856.5" y="1046.5" font-size="11" fill="#fff" textLength="16" lengthAdjust="spacingAndGlyphs">..98</text><rect x="849" y="1070" width="8" height="3.7" rx="1.8" fill="#9a9a9a"/><rect x="896" y="1035.2" width="23.2" height="29.6" rx="2" fill="#5d6770"/><rect x="898.5" y="1037.5" width="18" height="5" fill="#40c8f0"/><rect x="898.5" y="1044.5" width="4.6" height="5" fill="#d8dde2"/><rect x="904.7" y="1044.5" width="4.6" height="5" fill="#d8dde2"/><rect x="910.9" y="1044.5" width="4.6" height="5" fill="#d8dde2"/><rect x="898.5" y="1051.1" width="4.6" height="5" fill="#d8dde2"/><rect x="904.7" y="1051.1" width="4.6" height="5" fill="#d8dde2"/><rect x="898.5" y="1057.7" width="4.6" height="5" fill="#d8dde2"/><rect x="904.7" y="1057.7" width="4.6" height="5" fill="#d8dde2"/><rect x="910.9" y="1051.1" width="5.6" height="11.6" fill="#1a5aa8"/><path d="M947.8 1039 Q947.8 1037.2 949.6 1037.2 H958 L961 1040 H976.5 Q978.3 1040 978.3 1042 V1063.3 H947.8Z" fill="#e8a800"/><rect x="947.8" y="1041.5" width="30.5" height="21.8" rx="1" fill="url(#fold)"/><rect x="952" y="1055" width="22" height="8.3" rx="2" fill="#1a7ee0"/><rect x="956" y="1057" width="14" height="1.6" fill="#0a3a80"/><defs><linearGradient id="eyeg2" x1="0" y1="0" x2="1" y2="0"><stop offset="0" stop-color="#e88a20"/><stop offset="1" stop-color="#f8cc20"/></linearGradient><linearGradient id="dia" x1="0" y1="0" x2="0" y2="1"><stop offset="0" stop-color="#e02a20"/><stop offset="1" stop-color="#f88020"/></linearGradient></defs><path d="M1018 1034.8 L1033 1050 L1018 1065.1 L1002.7 1050Z" fill="url(#dia)"/><rect x="1006" y="1039" width="24" height="21.2" rx="4" fill="url(#eyeg2)"/><path d="M1008.5 1051 Q1012 1045 1018 1045 Q1024.5 1045 1027.5 1050 Q1024 1056 1018 1056 Q1011.5 1056 1008.5 1051Z" fill="#ececec"/><path d="M1012 1044.8 Q1018 1042.2 1023.5 1045.5 L1027.8 1048.8" fill="none" stroke="#5a9040" stroke-width="1.9"/><path d="M1007.8 1051.8 L1011.5 1055 Q1017.5 1058.5 1024.5 1055.5" fill="none" stroke="#5a9040" stroke-width="1.9"/><circle cx="1017.6" cy="1050.6" r="4.4" fill="#383838"/><circle cx="1015.9" cy="1048.7" r="1.3" fill="#ffffff"/><rect x="1059" y="1035" width="21" height="8" fill="#f2f2f2"/><rect x="1059" y="1035" width="21" height="1.5" fill="#1028d0"/><rect x="1059" y="1038.5" width="21" height="3.5" fill="#c4c4c4"/><rect x="1057.8" y="1042.5" width="25.5" height="22.4" fill="#ffffff"/><rect x="1058.5" y="1043" width="9.5" height="1.6" fill="#1028d0"/><rect x="1058.5" y="1044.6" width="9.5" height="1.4" fill="#c8c8b8"/><path d="M1059.5 1049 h1.5 v1.5 h-1.5z M1062 1048.5 h4 M1064 1048.5 v5 M1059.5 1058 h1.5 v1.5 h-1.5z M1062 1058 h3 M1063.5 1058 v5 M1066 1058 q2 0 2 3 q0 2 -1 2" fill="#000" stroke="#000" stroke-width="1"/><rect x="1069" y="1038.7" width="19" height="18" fill="#ffffff" stroke="#c0c0c0" stroke-width="0.6"/><rect x="1080" y="1038.7" width="8" height="1.5" fill="#1028d0"/><rect x="1070" y="1053" width="16" height="1.5" fill="#c8c8c8"/><path d="M1070.3 1042 V1054" stroke="#202020" stroke-width="0.9"/><path d="M1071 1045.3 H1077 Q1078.5 1045.3 1079 1047 L1081.5 1053.5" fill="none" stroke="#20d020" stroke-width="0.9"/><path d="M1075 1053.5 Q1077 1048 1079 1047.5 Q1080.5 1045.5 1082 1045 L1086 1044.3" fill="none" stroke="#ff2020" stroke-width="0.9"/><rect x="1113" y="1035" width="29.7" height="29.9" fill="#c4c4c4"/><path d="M1113.5 1064.5 V1035.5 H1142.5" fill="none" stroke="#ecead8" stroke-width="1"/><path d="M1117.5 1059.5 L1118.5 1058 L1120.5 1054 L1122.7 1050.6 L1124.5 1053 L1127 1058.4 L1130 1057.5 L1134 1056 L1137 1054.2 L1138.5 1053.5 V1059.5Z" fill="#c8c0a0"/><path d="M1117.5 1048 V1060.2 H1140 M1117.5 1058.5 L1118.5 1058 L1120.5 1054 L1122.7 1050.6 L1124.5 1053 L1127 1058.4 L1130 1057.5 L1134 1056 L1137 1054.2 L1138.5 1053.5" fill="none" stroke="#202020" stroke-width="1"/><path d="M1139 1058.5 L1141.5 1060.2 L1139 1062Z" fill="#202020"/><path d="M1117.5 1045 h1.5 v-1 q-1.5 -1 -1.5 -2.5 q0 -2.5 3 -2.5 q3 0 3 2.5 q0 1.5 -1.5 2.5 v1 h1.5" fill="none" stroke="#202020" stroke-width="1"/><rect x="1123.7" y="1069.7" width="8.4" height="4.5" rx="2.2" fill="#9a9a9a"/><rect x="1168" y="1035" width="30" height="29.9" fill="#ffffff"/><rect x="1182" y="1035" width="16" height="29.9" fill="#a0fcff"/><circle cx="1181.6" cy="1050" r="9.65" fill="none" stroke="#ff0000" stroke-width="5.8"/><rect x="1186" y="1047.5" width="12" height="6.7" fill="#a0fcff"/><path d="M1183.8 1047.5 L1196.5 1047.3 L1190.2 1053.2Z" fill="#ff0000"/><rect x="1223" y="1035" width="30" height="29.9" fill="#3c0aa0"/><text x="1224.5" y="1045.8" font-size="11.5" font-weight="bold" fill="#c8c8cc" textLength="27" lengthAdjust="spacingAndGlyphs">REW</text><path d="M1224 1062 Q1228 1058 1229 1048 Q1230 1058 1234 1058 Q1238 1056 1239 1049 Q1240 1058 1244 1057 L1253 1056 V1062Z" fill="#20a0b0" opacity="0.9"/><path d="M1225 1062 Q1228 1059 1229.5 1054 Q1231 1060 1236 1059 Q1238.5 1057 1239.5 1054 Q1241 1060 1246 1059 L1253 1059 V1062Z" fill="#b8e020"/><ellipse cx="1229.5" cy="1058.5" rx="2" ry="2.5" fill="#ff4010"/><ellipse cx="1239.5" cy="1058" rx="1.6" ry="2.5" fill="#ff3010"/><circle cx="1293" cy="1050" r="15" fill="url(#ug)"/><path d="M1283.5 1044.5 L1288 1043.5 L1291 1058 Q1294 1061 1297 1055 L1295 1041.5 L1299.5 1040.5 L1302 1054 Q1301 1062 1294 1062 Q1291 1062 1290 1061 L1291 1065 L1287.5 1065.5Z" fill="#f4f4f4"/><path d="M1336.5 1037 V1063 L1358.5 1050Z" fill="#ffffff" stroke="#2196f3" stroke-width="2.6" stroke-linejoin="round"/><path d="M1393 1053.5 H1412.5 L1415.3 1063.8 H1390Z" fill="#fca010"/><path d="M1395.5 1057 Q1402.6 1062 1409.8 1057 L1409 1053.5 H1396.3Z" fill="#e07000"/><path d="M1401 1036.5 Q1402.6 1035 1404.2 1036.5 L1409.8 1057 Q1402.6 1060 1395.5 1057Z" fill="#f88a00"/><path d="M1399.6 1040.5 H1405.6 L1407 1045.3 Q1402.6 1046.5 1398.2 1045.3Z" fill="#e8e8e8"/><path d="M1396.8 1050.5 Q1402.6 1051.8 1408.4 1050.5 L1409.8 1056.2 Q1402.6 1058.5 1395.4 1056.2Z" fill="#e4e4e4"/><rect x="1476" y="1025.5" width="6.5" height="49.5" rx="4" fill="#2b2a2e"/><rect x="1433.1" y="1025.1" width="43.5" height="50" rx="4" fill="#2e2d31" stroke="#3a393d" stroke-width="0.8"/><circle cx="1457.7" cy="1050" r="15.3" fill="#ffffff"/><path d="M1450 1042.5 L1457.7 1051 V1061" fill="none" stroke="url(#yg)" stroke-width="3.4" stroke-linecap="round"/><path d="M1457.7 1051 L1465.5 1042.5" fill="none" stroke="#ff40c0" stroke-width="3.4" stroke-linecap="round"/><rect x="1447.8" y="1070" width="20" height="3.9" rx="1.9" fill="#f08060"/><path d="M1627 1053.5 L1634 1046 L1641 1053.5" fill="none" stroke="#f0f0f0" stroke-width="1.6"/><text x="1667.60" y="1056" font-size="15" fill="#ffffff" font-weight="normal" textLength="27.50" lengthAdjust="spacingAndGlyphs" >РУС</text><path d="M1719.5 1047 Q1729 1038 1738.5 1047" fill="none" stroke="#fff" stroke-width="1.5"/><path d="M1722.5 1050 Q1729 1044 1735.5 1050" fill="none" stroke="#fff" stroke-width="1.5"/><path d="M1725.5 1053 Q1729 1050 1732.5 1053" fill="none" stroke="#fff" stroke-width="1.5"/><circle cx="1729" cy="1056" r="1.2" fill="#fff"/><path d="M1749.5 1046 H1753 L1758 1042 V1058 L1753 1054 H1749.5Z" fill="none" stroke="#fff" stroke-width="1.3" stroke-linejoin="round"/><path d="M1761 1046.5 Q1763 1050 1761 1053.5 M1764 1044 Q1767.5 1050 1764 1056 M1767 1041.5 Q1772 1050 1767 1058.5" fill="none" stroke="#fff" stroke-width="1.3"/><rect x="1779.8" y="1044" width="23" height="11.8" rx="4" fill="none" stroke="#ffffff" stroke-width="1.5"/><rect x="1781.3" y="1045.8" width="19.1" height="8.4" rx="1" fill="#9cd89a"/><path d="M1789.6 1039.8 L1792.8 1039.8 L1791.8 1044.3 L1794 1044.3 L1790.2 1050.6 L1790.9 1046.3 L1788.4 1046.3Z" fill="#ffffff" stroke="#2a1b25" stroke-width="1.2" paint-order="stroke"/><text x="1860.70" y="1044.8" font-size="15" fill="#ffffff" font-weight="normal" textLength="35.40" lengthAdjust="spacingAndGlyphs" >17:13</text><text x="1824.40" y="1064.3" font-size="15" fill="#ffffff" font-weight="normal" textLength="71.70" lengthAdjust="spacingAndGlyphs" >09.04.2026</text></svg></body></html>
